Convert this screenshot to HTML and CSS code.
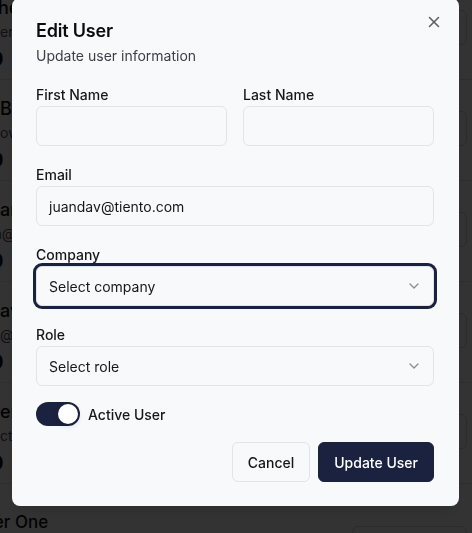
FILE: index.html
```html
<!DOCTYPE html>
<html lang="en">
<head>
<meta charset="utf-8">
<title>Edit User</title>
<link rel="stylesheet" href="styles.css">
</head>
<body>
<div class="page">
  <div class="row">
    <div class="info"><div class="name">hector Ruiz</div><div class="mail">ernesto@tiento.com</div><div class="count">0</div></div>
    <div class="act"></div>
  </div>
  <div class="row">
    <div class="info"><div class="name">Bruno Diaz</div><div class="mail">owner@tiento.com</div><div class="count">0</div></div>
    <div class="act"></div>
  </div>
  <div class="row">
    <div class="info"><div class="name">ariana Lopez</div><div class="mail">a@tiento.com</div><div class="count">0</div></div>
    <div class="act"></div>
  </div>
  <div class="row">
    <div class="info"><div class="name">avery Smith</div><div class="mail">@tiento.com</div><div class="count">0</div></div>
    <div class="act"></div>
  </div>
  <div class="row">
    <div class="info"><div class="name">eric Moss</div><div class="mail">ctor@tiento.com</div><div class="count">0</div></div>
    <div class="act"></div>
  </div>
  <div class="section">
    <div class="section-title">Customer One</div>
    <div class="section-btn"></div>
  </div>
</div>

<div class="overlay"></div>

<div class="modal" role="dialog">
  <button class="close" aria-label="Close">
    <svg width="18" height="18" viewBox="0 0 24 24" fill="none" stroke="currentColor" stroke-width="2" stroke-linecap="round" stroke-linejoin="round"><path d="M18 6 6 18"/><path d="m6 6 12 12"/></svg>
  </button>
  <div class="header">
    <h2 class="title">Edit User</h2>
    <p class="desc">Update user information</p>
  </div>
  <div class="form">
    <div class="grid2">
      <div class="field">
        <label class="label">First Name</label>
        <div class="input"></div>
      </div>
      <div class="field">
        <label class="label">Last Name</label>
        <div class="input"></div>
      </div>
    </div>
    <div class="field">
      <label class="label">Email</label>
      <div class="input">juandav@tiento.com</div>
    </div>
    <div class="field">
      <label class="label">Company</label>
      <div class="input select focused">
        <span>Select company</span>
        <svg class="chev" width="16" height="16" viewBox="0 0 24 24" fill="none" stroke="currentColor" stroke-width="2" stroke-linecap="round" stroke-linejoin="round"><path d="m6 9 6 6 6-6"/></svg>
      </div>
    </div>
    <div class="field">
      <label class="label">Role</label>
      <div class="input select">
        <span>Select role</span>
        <svg class="chev" width="16" height="16" viewBox="0 0 24 24" fill="none" stroke="currentColor" stroke-width="2" stroke-linecap="round" stroke-linejoin="round"><path d="m6 9 6 6 6-6"/></svg>
      </div>
    </div>
  </div>
  <div class="switch-row">
    <span class="switch"><span class="thumb"></span></span>
    <span class="switch-label">Active User</span>
  </div>
  <div class="footer">
    <button class="btn outline">Cancel</button>
    <button class="btn primary">Update User</button>
  </div>
</div>
</body>
</html>
```

FILE: styles.css
```css
* { box-sizing: border-box; }
html, body { margin: 0; padding: 0; }
body {
  width: 472px;
  height: 533px;
  overflow: hidden;
  font-family: Inter, "Noto Sans", "Liberation Sans", sans-serif;
  background: #ffffff;
  color: #0b0c10;
}

/* background page */
.page {
  margin-top: -21px;
  width: 472px;
}
.row {
  height: 101px;
  border-bottom: 1px solid #e4e4e7;
  display: flex;
  justify-content: space-between;
  align-items: flex-start;
}
.info { padding-top: 17px; }
.name { font-size: 18px; font-weight: 500; line-height: 24px; white-space: nowrap; }
.mail { font-size: 14px; line-height: 20px; margin-top: 2px; color: #52525b; white-space: nowrap; }
.count { font-size: 20px; font-weight: 700; line-height: 26px; margin-top: 4px; margin-left: -10px; }
.row:nth-child(1) .name { margin-left: -2px; }
.row:nth-child(3) .mail { margin-left: -6px; }
.act {
  margin-top: 31px;
  margin-right: 5px;
  width: 110px;
  height: 35px;
  border: 1px solid #d4d4d8;
  border-radius: 6px;
}
.section {
  display: flex;
  justify-content: space-between;
  align-items: flex-start;
}
.section-title {
  font-size: 17px;
  font-weight: 500;
  line-height: 24px;
  margin-top: 26px;
  margin-left: -69px;
  white-space: nowrap;
}
.section-btn {
  margin-top: 42px;
  margin-right: 5px;
  width: 115px;
  height: 36px;
  border: 1px solid #d4d4d8;
  border-radius: 6px;
}

.overlay {
  position: fixed;
  inset: 0;
  background: rgba(0, 0, 0, 0.8);
}

/* dialog */
.modal {
  position: fixed;
  left: 11.5px;
  top: -2px;
  width: 447px;
  background: #f8f9fb;
  border-radius: 8px;
  padding: 24px 24.5px;
  box-shadow: 0 10px 15px -3px rgba(0,0,0,0.1);
}
.close {
  position: absolute;
  right: 15.5px;
  top: 15px;
  width: 18px;
  height: 18px;
  padding: 0;
  border: 0;
  background: none;
  color: #5b5d63;
  display: flex;
}
.header { display: flex; flex-direction: column; gap: 6px; }
.title {
  margin: 0;
  font-size: 18px;
  line-height: 18px;
  font-weight: 600;
  letter-spacing: -0.2px;
  color: #0b0c10;
}
.desc {
  margin: 0;
  font-size: 14px;
  line-height: 20px;
  color: #3b3e46;
}
.form {
  margin-top: 22px;
  display: flex;
  flex-direction: column;
  gap: 22px;
}
.grid2 {
  display: grid;
  grid-template-columns: 1fr 1fr;
  gap: 16px;
}
.field { display: flex; flex-direction: column; gap: 4px; }
.label {
  font-size: 14px;
  line-height: 14px;
  font-weight: 500;
  color: #16171b;
}
.input {
  height: 40px;
  border: 1px solid #e2e4e8;
  border-radius: 6px;
  background: #f8f9fb;
  padding: 0 12px;
  display: flex;
  align-items: center;
  font-size: 14px;
  color: #16171b;
}
.select { justify-content: space-between; }
.chev { color: #8c8e93; margin-right: -1px; }
.focused {
  box-shadow: 0 0 0 3px #1b2240;
}
.switch-row {
  margin-top: 16px;
  display: flex;
  align-items: center;
  gap: 8px;
}
.switch {
  width: 44px;
  height: 24px;
  border-radius: 12px;
  background: #1b2240;
  padding: 2px;
  display: flex;
  justify-content: flex-end;
}
.thumb {
  width: 20px;
  height: 20px;
  border-radius: 50%;
  background: #ffffff;
  box-shadow: 0 2px 6px rgba(0,0,0,0.15);
}
.switch-label {
  font-size: 14px;
  font-weight: 500;
  color: #16171b;
}
.footer {
  margin-top: 16px;
  display: flex;
  justify-content: flex-end;
  gap: 8px;
}
.btn {
  height: 40px;
  padding: 0 15px;
  border-radius: 6px;
  font-family: inherit;
  font-size: 14px;
  font-weight: 500;
}
.outline {
  background: #f8f9fb;
  border: 1px solid #e2e4e8;
  color: #16171b;
}
.primary {
  background: #1b2240;
  border: 1px solid #1b2240;
  color: #ffffff;
}
```
